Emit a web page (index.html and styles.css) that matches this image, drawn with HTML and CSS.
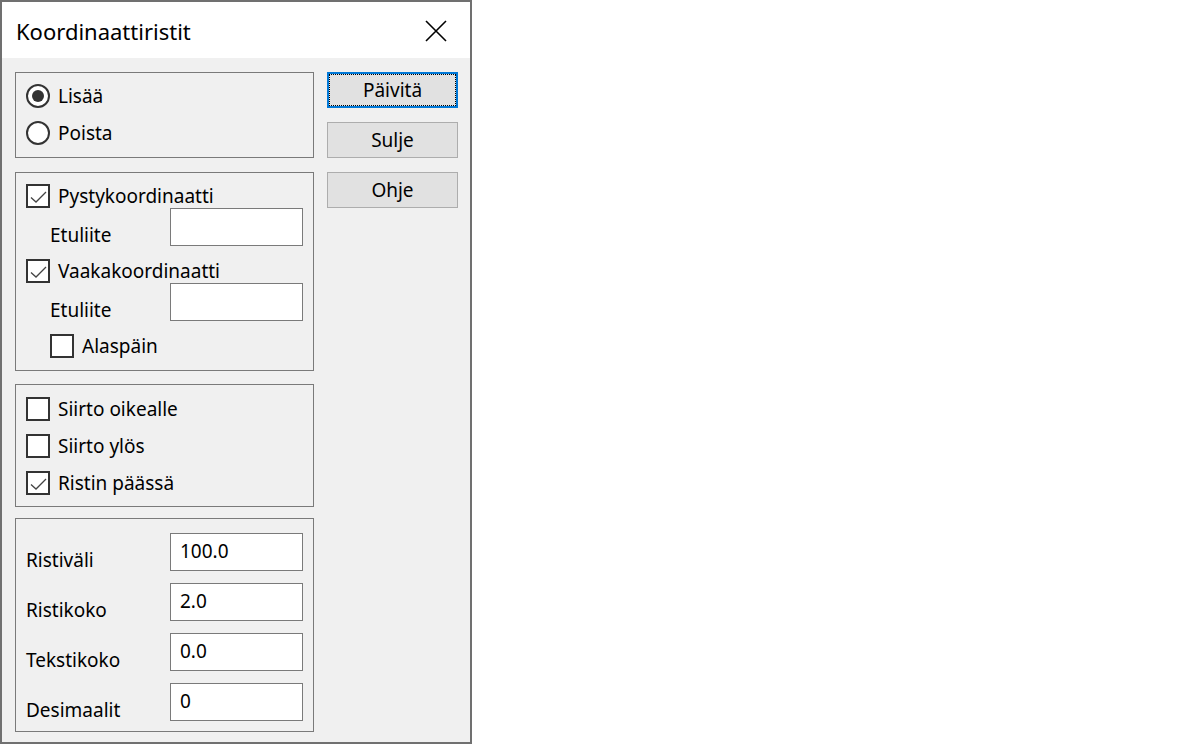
FILE: index.html
```html
<!DOCTYPE html>
<html lang="fi">
<head>
<meta charset="utf-8">
<title>Koordinaattiristit</title>
<link rel="stylesheet" href="styles.css">
</head>
<body>
<div class="window">
  <div class="titlebar">
    <span class="title">Koordinaattiristit</span>
    <svg class="close" width="22" height="22" viewBox="0 0 22 22"><path d="M1 1 L21 21 M21 1 L1 21" stroke="#000" stroke-width="1.6" fill="none"/></svg>
  </div>
  <div class="content">
    <div class="left">
      <div class="group g1">
        <div class="row"><span class="radio on"></span><span class="lbl">Lisää</span></div>
        <div class="row"><span class="radio"></span><span class="lbl">Poista</span></div>
      </div>
      <div class="group g2">
        <div class="row"><span class="check on"><svg viewBox="0 0 20 20" width="20" height="20"><path d="M3 11.5 L8 16 L18 6" stroke="#444" stroke-width="1.3" fill="none"/></svg></span><span class="lbl">Pystykoordinaatti</span></div>
        <div class="field sub"><span class="flbl">Etuliite</span><span class="input"></span></div>
        <div class="row"><span class="check on"><svg viewBox="0 0 20 20" width="20" height="20"><path d="M3 11.5 L8 16 L18 6" stroke="#444" stroke-width="1.3" fill="none"/></svg></span><span class="lbl">Vaakakoordinaatti</span></div>
        <div class="field sub"><span class="flbl">Etuliite</span><span class="input"></span></div>
        <div class="row sub"><span class="check"></span><span class="lbl">Alaspäin</span></div>
      </div>
      <div class="group g3">
        <div class="row"><span class="check"></span><span class="lbl">Siirto oikealle</span></div>
        <div class="row"><span class="check"></span><span class="lbl">Siirto ylös</span></div>
        <div class="row"><span class="check on"><svg viewBox="0 0 20 20" width="20" height="20"><path d="M3 11.5 L8 16 L18 6" stroke="#444" stroke-width="1.3" fill="none"/></svg></span><span class="lbl">Ristin päässä</span></div>
      </div>
      <div class="group g4">
        <div class="field"><span class="flbl">Ristiväli</span><span class="input">100.0</span></div>
        <div class="field"><span class="flbl">Ristikoko</span><span class="input">2.0</span></div>
        <div class="field"><span class="flbl">Tekstikoko</span><span class="input">0.0</span></div>
        <div class="field"><span class="flbl">Desimaalit</span><span class="input">0</span></div>
      </div>
    </div>
    <div class="right">
      <button class="btn default">Päivitä</button>
      <button class="btn">Sulje</button>
      <button class="btn">Ohje</button>
    </div>
  </div>
</div>
</body>
</html>
```

FILE: styles.css
```css
html, body {
  margin: 0;
  padding: 0;
  background: #fff;
}
body {
  font-family: "Noto Sans", "Open Sans", sans-serif;
  font-size: 19px;
  color: #000;
}
.window {
  width: 472px;
  height: 744px;
  box-sizing: border-box;
  border: 2px solid #707070;
  background: #f0f0f0;
  display: flex;
  flex-direction: column;
}
.titlebar {
  height: 56px;
  background: #fff;
  display: flex;
  align-items: center;
  justify-content: space-between;
  padding: 0 23px 0 14px;
  flex: none;
}
.title {
  font-size: 22px;
  position: relative;
  top: 1px;
}
.close {
  display: block;
  position: relative;
  top: 1px;
}
.content {
  display: flex;
  gap: 13px;
  padding: 14px 0 0 13px;
}
.left {
  width: 299px;
  display: flex;
  flex-direction: column;
}
.group {
  border: 1px solid #7a7a7a;
  padding: 0 10px;
  display: flex;
  flex-direction: column;
}
.g1 { padding-top: 10px; padding-bottom: 12px; gap: 12px; }
.g2 { margin-top: 14px; padding-top: 10px; padding-bottom: 12px; }
.g3 { margin-top: 13px; padding-top: 12px; padding-bottom: 11px; gap: 13px; }
.g4 { margin-top: 11px; padding-top: 14px; padding-bottom: 10px; gap: 12px; }
.row {
  display: flex;
  align-items: center;
  height: 25px;
}
.g3 .row { height: 24px; }
.g2 .row + .field + .row { margin-top: 12px; }
.g2 .field + .row.sub { margin-top: 12px; }
.sub { padding-left: 24px; }
.lbl {
  margin-left: 8px;
  line-height: 24px;
}
.radio {
  width: 24px;
  height: 24px;
  box-sizing: border-box;
  border: 2px solid #333;
  border-radius: 50%;
  background: #fff;
  flex: none;
  display: flex;
  align-items: center;
  justify-content: center;
}
.radio.on::after {
  content: "";
  width: 12px;
  height: 12px;
  border-radius: 50%;
  background: #333;
}
.check {
  width: 24px;
  height: 24px;
  box-sizing: border-box;
  border: 2px solid #333;
  background: #fff;
  flex: none;
  display: flex;
  align-items: center;
  justify-content: center;
}
.check svg { display: block; }
.field {
  display: flex;
  justify-content: space-between;
  align-items: flex-end;
  height: 38px;
}
.flbl {
  line-height: 20px;
  position: relative;
  top: -1px;
}
.input {
  width: 133px;
  height: 38px;
  box-sizing: border-box;
  border: 1px solid #7a7a7a;
  background: #fff;
  padding: 5px 0 0 9px;
  line-height: 24px;
}
.right {
  display: flex;
  flex-direction: column;
  gap: 14px;
}
.btn {
  width: 131px;
  height: 36px;
  box-sizing: border-box;
  border: 1px solid #adadad;
  background: #e1e1e1;
  font-family: inherit;
  font-size: 19px;
  color: #000;
  padding: 0;
  margin: 0;
}
.btn.default {
  border: 2px solid #0078d7;
  outline: 1px dotted #000;
  outline-offset: -3px;
}
```
